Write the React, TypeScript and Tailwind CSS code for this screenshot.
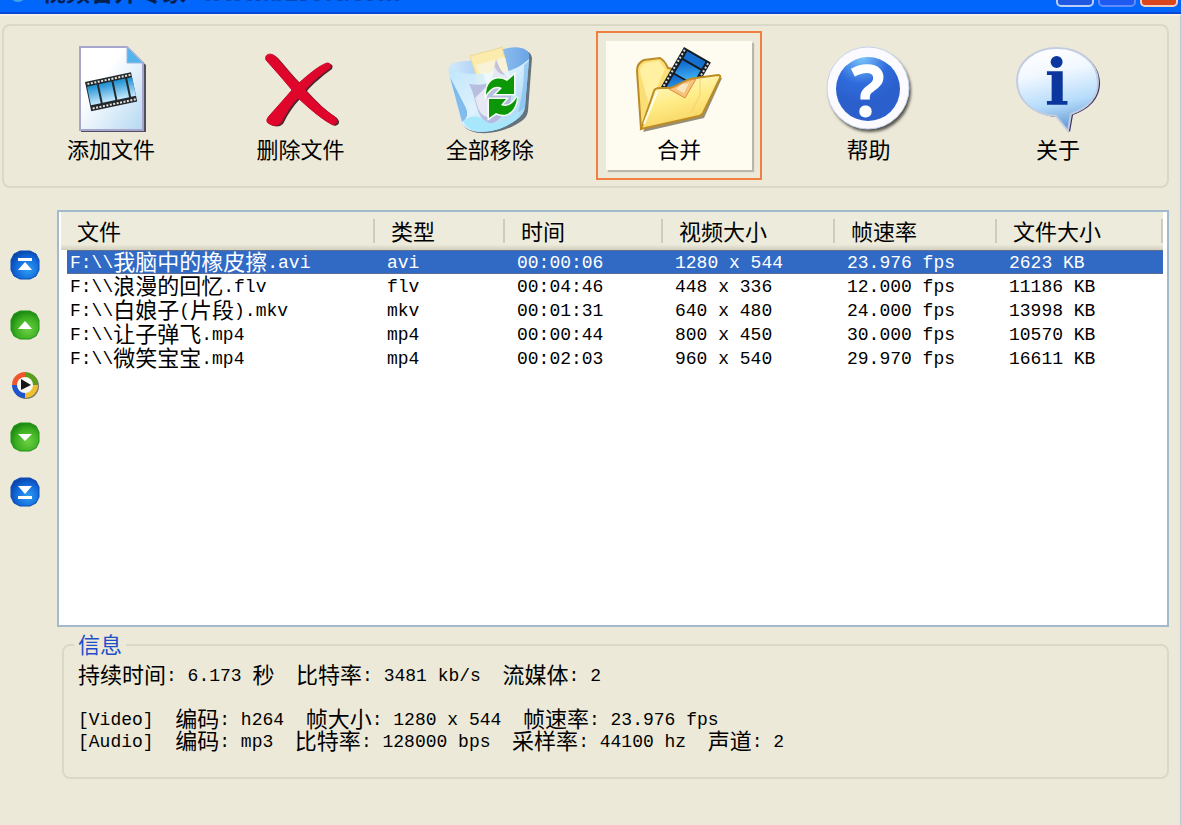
import { useState, type ReactNode } from 'react';
import clsx from 'clsx';

type Clip = {
  name: string;
  type: string;
  time: string;
  size: string;
  fps: string;
  bytes: string;
};

const CLIPS: Clip[] = [
  { name: 'F:\\\\我脑中的橡皮擦.avi', type: 'avi', time: '00:00:06', size: '1280 x 544', fps: '23.976 fps', bytes: '2623 KB' },
  { name: 'F:\\\\浪漫的回忆.flv', type: 'flv', time: '00:04:46', size: '448 x 336', fps: '12.000 fps', bytes: '11186 KB' },
  { name: 'F:\\\\白娘子(片段).mkv', type: 'mkv', time: '00:01:31', size: '640 x 480', fps: '24.000 fps', bytes: '13998 KB' },
  { name: 'F:\\\\让子弹飞.mp4', type: 'mp4', time: '00:00:44', size: '800 x 450', fps: '30.000 fps', bytes: '10570 KB' },
  { name: 'F:\\\\微笑宝宝.mp4', type: 'mp4', time: '00:02:03', size: '960 x 540', fps: '29.970 fps', bytes: '16611 KB' },
];

const COLUMNS = [
  { label: '文件', width: 'w-[314px]' },
  { label: '类型', width: 'w-[130px]' },
  { label: '时间', width: 'w-[158px]' },
  { label: '视频大小', width: 'w-[172px]' },
  { label: '帧速率', width: 'w-[162px]' },
  { label: '文件大小', width: 'w-[166px]' },
];

const INFO = [
  '持续时间: 6.173 秒  比特率: 3481 kb/s  流媒体: 2',
  ' ',
  '[Video]  编码: h264  帧大小: 1280 x 544  帧速率: 23.976 fps',
  '[Audio]  编码: mp3  比特率: 128000 bps  采样率: 44100 hz  声道: 2',
];

/** Full-width characters keep the parent font, the rest is set in half-width mono. */
function Mixed({ text }: { text: string }) {
  return (
    <span className="whitespace-pre">
      {text.split(/([\u4e00-\u9fff]+)/).filter(Boolean).map((part, i) =>
        /[\u4e00-\u9fff]/.test(part)
          ? <span key={i}>{part}</span>
          : <span key={i} className="align-[2px] font-['Liberation_Mono',monospace] text-[18px] leading-3">{part}</span>,
      )}
    </span>
  );
}

function Icon({ children }: { children: ReactNode }) {
  return <svg viewBox="0 0 88 88" className="size-[88px] overflow-visible" aria-hidden="true">{children}</svg>;
}

function AddIcon() {
  return (
    <Icon>
      <defs>
        <linearGradient id="page" x1="0" y1="0" x2="1" y2="1">
          <stop offset="0.35" stopColor="#fff" />
          <stop offset="1" stopColor="#b4d8f2" />
        </linearGradient>
        <linearGradient id="frame" x1="0" y1="0" x2="0" y2="1">
          <stop offset="0" stopColor="#1b8fd0" />
          <stop offset="1" stopColor="#c5eaff" />
        </linearGradient>
      </defs>
      <path d="M14 4H61L79 20V87H14z" fill="#4f4f63" />
      <path d="M13 2H60L76 18V85H13z" fill="url(#page)" stroke="#a8a6cc" strokeWidth="2" />
      <path d="M60 2V18H76z" fill="#55b4ec" stroke="#9db8dc" />
      <g transform="translate(18 37) rotate(-12)">
        <rect width="47" height="30" fill="#22282c" />
        <rect x="1" y="5" width="10" height="19" fill="url(#frame)" />
        <rect x="13" y="5" width="13" height="19" fill="url(#frame)" />
        <rect x="28" y="5" width="12" height="19" fill="url(#frame)" />
        <rect x="42" y="5" width="5" height="19" fill="url(#frame)" />
        <path d="M2 2.500H46M2 27.500H46" stroke="#e4e4de" strokeWidth="2" strokeDasharray="2 1.500" />
      </g>
    </Icon>
  );
}

function DeleteIcon() {
  const cross =
    'M10 15C8 9 15 7 20 12C27 20 35 30 43 38C51 31 62 21 71 18Q76 18 74 23C63 31 55 38 49 45C58 55 68 65 79 72Q84 78 77 80C65 74 52 62 42 53C35 60 30 68 25 78Q19 83 12 78Q9 75 14 70C22 61 30 52 36 45C27 34 18 24 10 15z';
  return (
    <Icon>
      <path d={cross} transform="translate(2 1)" fill="#4b2530" />
      <path d={cross} fill="#e0062b" stroke="#c80828" strokeWidth="1" />
    </Icon>
  );
}

function ClearIcon() {
  return (
    <Icon>
      <defs>
        <linearGradient id="bin" x1="0" y1="0" x2="1" y2="1">
          <stop offset="0" stopColor="#b9e2fb" />
          <stop offset="0.5" stopColor="#e4f6fd" />
          <stop offset="1" stopColor="#9ad2f4" />
        </linearGradient>
        <linearGradient id="rim" x1="0" y1="0" x2="1" y2="0">
          <stop offset="0" stopColor="#d3eafc" />
          <stop offset="1" stopColor="#6aa5e6" />
        </linearGradient>
      </defs>
      <path d="M5 20Q2 24 5 33L16 78C20 90 52 92 76 74Q80 71 81 65L85 12Q84 4 75 5C60 8 50 22 5 20z" fill="#66727c" transform="translate(1 1)" />
      <path d="M3 22C7 15 18 17 30 15C48 6 70 -2 80 5Q84 7 83 14L79 62Q78 70 70 75C52 88 23 92 16 78L4 33Q2 27 3 22z" fill="url(#rim)" />
      <path d="M24 11C36 7 47 6 56 2L63 30L33 39z" fill="#fbecae" stroke="#eed993" />
      <path d="M30 20L59 12L63 30L37 38z" fill="#f8f2d8" />
      <path d="M3 22C17 31 27 28 38 29C58 30 74 23 83 14L79 62Q78 70 70 75C52 88 23 92 16 78L4 33Q2 27 3 22z" fill="url(#bin)" opacity="0.88" />
      <path d="M4 32L16 77Q24 72 20 63z" fill="#5ba5e7" opacity="0.7" />
      <path d="M83 16L79 62L72 68C76 52 78 38 78 20z" fill="#76b8ef" opacity="0.6" />
      <path d="M23 39C33 40 40 41 46 35L50 14C55 29 62 34 68 32L64 60C54 75 49 79 43 78C29 73 31 53 23 39z" fill="#aaa4d2" opacity="0.65" />
      <path d="M37 28Q46 30 49 22Q53 32 66 30L60 40L42 44z" fill="#f4fbfe" opacity="0.7" />
      <path d="M29 53L39 43L45 72C34 73 32 63 29 53z" fill="#f4f3fa" opacity="0.8" />
      <path d="M17 76Q30 66 42 78Q60 80 73 66Q75 72 67 77C48 90 23 90 17 76z" fill="#a7e7fb" />
      <g fill="#0b9708" stroke="#f6fff4" strokeWidth="3" paintOrder="stroke">
        <path d="M40 50C40 35 51 30 61 36L68 30V49H50L56 43C49 40 45 43 40 50z" />
        <path d="M71 52C70 67 60 73 50 68L43 73V54H60L55 60C61 63 67 59 71 52z" />
      </g>
    </Icon>
  );
}

function MergeIcon() {
  return (
    <Icon>
      <defs>
        <linearGradient id="folder" x1="0.2" y1="0" x2="0.6" y2="1">
          <stop offset="0" stopColor="#fffbd2" />
          <stop offset="0.5" stopColor="#ffec86" />
          <stop offset="1" stopColor="#f6ce5c" />
        </linearGradient>
        <linearGradient id="cell" x1="0" y1="0" x2="1" y2="1">
          <stop offset="0" stopColor="#0a62c8" />
          <stop offset="1" stopColor="#4cc0fb" />
        </linearGradient>
      </defs>
      <path d="M87 33L69 73L8 87L11 80L66 67L83 32z" fill="#6b6143" opacity="0.7" />
      <path d="M2 26Q2 18 9 15L25 13Q30 16 33 23L60 28L40 66L6 84z" fill="#fbdf76" stroke="#bb8b27" strokeWidth="2" />
      <path d="M5 27Q5 20 11 18L24 16L30 24L14 60z" fill="#fff0a2" />
      <g transform="translate(49 2) rotate(30)">
        <rect width="31" height="49" fill="#161c22" />
        <rect x="5" y="2" width="21" height="8" fill="#1670cf" />
        <rect x="5" y="12" width="21" height="15" fill="url(#cell)" />
        <rect x="5" y="29" width="21" height="16" fill="url(#cell)" />
        <path d="M2 2V48M29 2V48" stroke="#d4d9dd" strokeWidth="2" strokeDasharray="2 2" />
      </g>
      <path d="M6 84L19 46Q20 43 25 43L35 43C46 40 49 34 61 33L83 30Q86 30 85 33L68 68Q67 70 64 71z" fill="url(#folder)" stroke="#bd8c22" strokeWidth="2" />
      <path d="M34 44C45 41 49 35 61 34L50 53z" fill="#f6c37a" stroke="#df8b3d" strokeWidth="1" />
      <path d="M41 44L47 39L54 38L49 48z" fill="#fbe5c0" />
      <path d="M9 79L22 47" stroke="#fffdf0" strokeWidth="2" />
      <path d="M65 33V50L56 68" stroke="#f6cf74" strokeWidth="1" fill="none" />
    </Icon>
  );
}

function HelpIcon() {
  return (
    <Icon>
      <defs>
        <radialGradient id="ball" cx="0.4" cy="0" r="0.7">
          <stop offset="0" stopColor="#7cc6fb" />
          <stop offset="0.6" stopColor="#2f6bdc" />
          <stop offset="1" stopColor="#2b60cc" />
        </radialGradient>
        <filter id="soft"><feGaussianBlur stdDeviation="1.500" /></filter>
      </defs>
      <circle cx="45" cy="46" r="41" fill="#55534c" filter="url(#soft)" />
      <circle cx="43" cy="43" r="41" fill="#fbfbff" stroke="#c6d4ee" strokeWidth="1" />
      <circle cx="43" cy="44" r="32" fill="url(#ball)" />
      <text x="43" y="72" textAnchor="middle" fill="#fff" className="font-['Open_Sans',sans-serif] text-[72px] font-bold">?</text>
    </Icon>
  );
}

function AboutIcon() {
  const bubble = 'M43 3C67 3 84 18 84 37C84 52 74 63 57 69L54 86L42 71C18 70 3 54 3 36C3 17 20 3 43 3z';
  return (
    <Icon>
      <defs>
        <linearGradient id="bubble" x1="0.3" y1="0" x2="0.5" y2="1">
          <stop offset="0" stopColor="#fff" />
          <stop offset="0.3" stopColor="#f2f8ff" />
          <stop offset="0.68" stopColor="#b6dcfb" />
          <stop offset="1" stopColor="#6298d4" />
        </linearGradient>
      </defs>
      <path d={bubble} transform="translate(2 1)" fill="#34295c" />
      <path d={bubble} fill="url(#bubble)" stroke="#c3cde0" strokeWidth="2" />
      <text x="43" y="59" textAnchor="middle" fill="#0a369d" className="font-['DejaVu_Serif',serif] text-[64px] font-bold">i</text>
    </Icon>
  );
}

const TOOLS = [
  { label: '添加文件', icon: <AddIcon /> },
  { label: '删除文件', icon: <DeleteIcon /> },
  { label: '全部移除', icon: <ClearIcon /> },
  { label: '合并', icon: <MergeIcon />, active: true },
  { label: '帮助', icon: <HelpIcon /> },
  { label: '关于', icon: <AboutIcon /> },
];

function OrderButton({ label, tone, children }: { label: string; tone: 'blue' | 'green'; children: ReactNode }) {
  const blue = tone === 'blue';
  const shade = `order-${tone}`;
  return (
    <button aria-label={label} className="size-[30px]">
      <svg viewBox="0 0 30 30" className="size-[30px]">
        <defs>
          <radialGradient id={shade} cx="0.6" cy="0.65" r="0.65">
            <stop offset="0" stopColor={blue ? '#2fa0f5' : '#6fd044'} />
            <stop offset="0.65" stopColor={blue ? '#1268d8' : '#3cae22'} />
            <stop offset="1" stopColor={blue ? '#0a48b0' : '#1c8a10'} />
          </radialGradient>
        </defs>
        <path d="M10 1H20L26 4L29 10V20L26 26L20 29H10L4 26L1 20V10L4 4z" fill={`url(#${shade})`} stroke={blue ? '#0a4cb4' : '#239318'} strokeWidth="1" strokeLinejoin="round" />
        {children}
      </svg>
    </button>
  );
}

function OrderBar() {
  return (
    <div className="flex w-[46px] shrink-0 flex-col items-center gap-[22px] pt-10">
      <div className="flex flex-col gap-[30px]">
        <OrderButton label="移到顶部" tone="blue">
          <path d="M8 8H22V11H8zM15 12L22 20H8z" fill="#fff" />
        </OrderButton>
        <OrderButton label="上移" tone="green">
          <path d="M15 11L22 19H8z" fill="#fff" />
        </OrderButton>
        <button aria-label="播放" className="size-[30px]">
          <svg viewBox="0 0 30 30" className="size-[30px]">
            <circle cx="16" cy="16" r="13" fill="#77766c" />
            <path d="M15 15V2A13 13 0 0 0 2 15z" fill="#f0562c" />
            <path d="M15 15H28A13 13 0 0 0 15 2z" fill="#5a9e1c" />
            <path d="M15 15V28A13 13 0 0 0 28 15z" fill="#eec030" />
            <path d="M15 15H2A13 13 0 0 0 15 28z" fill="#1e54cc" />
            <circle cx="15" cy="15" r="8" fill="#f8f8f4" />
            <path d="M11 9L21 15L11 20z" fill="#161616" />
          </svg>
        </button>
      </div>
      <div className="flex flex-col gap-[25px]">
        <OrderButton label="下移" tone="green">
          <path d="M15 19L22 12H8z" fill="#fff" />
        </OrderButton>
        <OrderButton label="移到底部" tone="blue">
          <path d="M8 19H22V22H8zM15 17L22 9H8z" fill="#fff" />
        </OrderButton>
      </div>
    </div>
  );
}

function TitleBar() {
  const box = 'h-[22px] w-[38px] rounded-[5px] border-2';
  return (
    <header className="flex h-[14px] items-end justify-between overflow-hidden border-b-2 border-[#0a46d8] bg-[#0066fc] pr-[3px] pl-[10px]">
      <div className="flex items-end gap-4 pb-[10px] text-[24px] leading-[22px] font-bold text-[#04204f]">
        <span className="size-4 rounded-full bg-[#3fa4e8]" />
        <span>视频合并专家</span>
        <span className="text-[#0347b5]">www.bzsoft.com</span>
      </div>
      <div className="flex gap-1 pb-[5px]">
        <button aria-label="最小化" className={clsx(box, 'border-[#b9d0ff] bg-[#2158e0]')} />
        <button aria-label="最大化" className={clsx(box, 'border-[#5f8dff] bg-[#1f5af0]')} />
        <button aria-label="关闭" className={clsx(box, 'border-[#f3cfc6] bg-[#d9451c]')} />
      </div>
    </header>
  );
}

export default function App() {
  const [selected, setSelected] = useState(0);

  return (
    <div className="flex min-h-screen flex-col bg-[#ece9d8] font-['Noto_Sans_CJK_SC',sans-serif] text-[22px] leading-[22px] text-black">
      <TitleBar />
      <div className="flex-1 border-t-2 border-r border-t-[#f4f1e4] border-r-[#bcc6d2] pt-2 pr-[11px] pb-10 pl-[2px]">
        <nav className="flex justify-between rounded-lg border-2 border-[#dad8c6] pt-[5px] pr-[26px] pb-[6px] pl-6">
          {TOOLS.map((t) => (
            <button
              key={t.label}
              className={clsx('h-[149px] w-[166px] border-2 p-2', t.active ? 'border-[#f08040]' : 'border-transparent')}
            >
              <span
                className={clsx(
                  'flex h-full flex-col items-center gap-1 pt-1',
                  t.active && 'bg-[#fefcf0] shadow-[2px_2px_1px_#b9b7a8]',
                )}
              >
                {t.icon}
                <span>{t.label}</span>
              </span>
            </button>
          ))}
        </nav>

        <main className="mt-[22px] flex">
          <OrderBar />
          <div className="ml-[9px] min-h-[417px] min-w-0 flex-1 border-2 border-[#a3b9cc] bg-white pr-1 pl-[2px]">
            <table className="w-full table-fixed border-separate border-spacing-0">
              <thead>
                <tr className="h-[38px] bg-linear-to-b from-[#edebdc] from-85% to-[#d2cfbd]">
                  {COLUMNS.map((c) => (
                    <th key={c.label} className={clsx('p-0 text-left font-normal', c.width)}>
                      <div className="h-6 border-r-2 border-[#cfccba] pl-4">{c.label}</div>
                    </th>
                  ))}
                </tr>
              </thead>
              <tbody>
                {CLIPS.map((c, i) => (
                  <tr
                    key={c.name}
                    onClick={() => setSelected(i)}
                    className={clsx('h-6 leading-5', i === selected && 'bg-[#316ac5] text-white')}
                  >
                    {[c.name, c.type, c.time, c.size, c.fps, c.bytes].map((v, k) => (
                      <td
                        key={k}
                        className={clsx(
                          'p-0 align-top',
                          k === 0 ? 'border-l-[6px] border-white pl-[3px]' : 'pl-3',
                          i === selected && 'shadow-[inset_0_1px_#5f6f94,inset_0_-1px_#5f6f94]',
                        )}
                      >
                        <Mixed text={v} />
                      </td>
                    ))}
                  </tr>
                ))}
              </tbody>
            </table>
          </div>
        </main>

        <fieldset className="mt-[6px] ml-[60px] rounded-lg border-2 border-[#dad8c6] px-[10px] pt-[5px] pb-[27px]">
          <legend className="px-1 pb-1 leading-5 text-[#1c4fc8]">信息</legend>
          <div className="pl-1">
            {INFO.map((line, i) => (
              <p key={i}><Mixed text={line} /></p>
            ))}
          </div>
        </fieldset>
      </div>
    </div>
  );
}
